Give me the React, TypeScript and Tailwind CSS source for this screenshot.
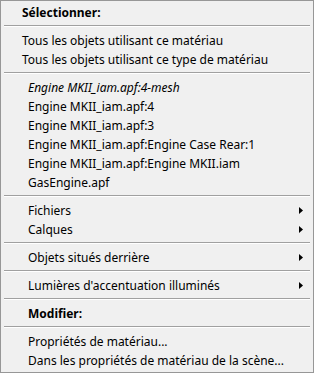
import { ChevronRight } from 'lucide-react'

type Item = {
  label: string
  bold?: boolean
  italic?: boolean
  indent?: 'sm' | 'lg'
  submenu?: boolean
}

type Entry = Item | 'sep'

const entries: Entry[] = [
  { label: 'Sélectionner:', bold: true, indent: 'sm' },
  'sep',
  { label: 'Tous les objets utilisant ce matériau', indent: 'sm' },
  { label: 'Tous les objets utilisant ce type de matériau', indent: 'sm' },
  'sep',
  { label: 'Engine MKII_iam.apf:4-mesh', italic: true },
  { label: 'Engine MKII_iam.apf:4' },
  { label: 'Engine MKII_iam.apf:3' },
  { label: 'Engine MKII_iam.apf:Engine Case Rear:1' },
  { label: 'Engine MKII_iam.apf:Engine MKII.iam' },
  { label: 'GasEngine.apf' },
  'sep',
  { label: 'Fichiers', submenu: true },
  { label: 'Calques', submenu: true },
  'sep',
  { label: 'Objets situés derrière', submenu: true },
  'sep',
  { label: "Lumières d'accentuation illuminés", submenu: true },
  'sep',
  { label: 'Modifier:', bold: true },
  'sep',
  { label: 'Propriétés de matériau...' },
  { label: 'Dans les propriétés de matériau de la scène...' },
]

function Arrow() {
  return (
    <svg width="4" height="7" viewBox="0 0 4 7" className="mr-[10px]">
      <path d="M0 0 L4 3.5 L0 7 Z" fill="#000" />
    </svg>
  )
}

void ChevronRight

export default function App() {
  return (
    <div
      className="w-[314px] h-[373px] bg-[#f0f0f0] border border-[#979797] pt-[2px] pb-[2px] text-black text-[12px] leading-none"
      style={{ fontFamily: '"Segoe UI", "Noto Sans", "Open Sans", sans-serif' }}
    >
      {entries.map((e, i) => {
        if (e === 'sep') {
          return (
            <div key={i} className="h-[9px] pt-[3px] px-[3px]">
              <div className="h-px bg-[#a0a0a0]" />
              <div className="h-px bg-white" />
            </div>
          )
        }
        return (
          <div
            key={i}
            className={`h-[19px] flex items-center justify-between ${e.indent === 'sm' ? 'pl-[21px]' : 'pl-[27px]'}`}
          >
            <span className={`whitespace-nowrap ${e.bold ? 'font-bold' : ''} ${e.italic ? 'italic' : ''}`}>
              {e.label}
            </span>
            {e.submenu && <Arrow />}
          </div>
        )
      })}
    </div>
  )
}
